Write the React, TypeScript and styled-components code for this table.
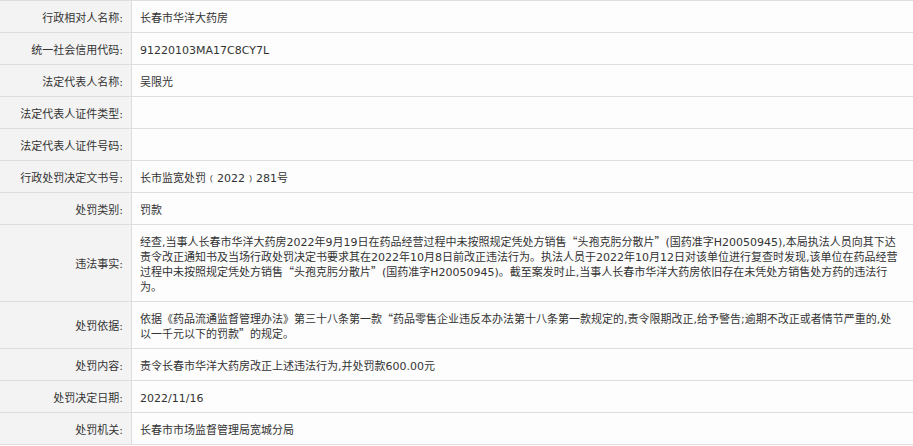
import styled, { createGlobalStyle } from 'styled-components';

const GlobalStyle = createGlobalStyle`
  html, body {
    margin: 0;
    padding: 0;
    background: #fdfdfd;
  }
`;

// DejaVu for latin/digits, Noto CJK picks up the Chinese
const Table = styled.table`
  width: 100%;
  border-collapse: collapse;
  table-layout: fixed;
  border-top: 1px solid #dedede;
  font-family: "DejaVu Sans", "Noto Sans CJK SC", sans-serif;
  font-size: 11px;
  line-height: 15px;
  color: #333;
`;

const Row = styled.tr`
  border-bottom: 1px solid #dedede;
`;

const Label = styled.th`
  width: 114px;
  padding: 9.5px 8px 6.5px 9px;
  background: #f3f3f3;
  border-right: 1px solid #dedede;
  font-weight: normal;
  text-align: right;
  vertical-align: middle;
  white-space: nowrap;
`;

const Value = styled.td`
  padding: 9.5px 12px 6.5px 8px;
  background: #fdfdfd;
  text-align: left;
  vertical-align: middle;
  word-break: break-all;
`;

// curly quotes drawn with the CJK face, as in the original page;
// zero line-height so the taller CJK metrics don't stretch the line
const Quote = styled.span`
  font-family: "Noto Sans CJK SC", sans-serif;
  line-height: 0;
`;

function renderText(text: string) {
  return text.split(/([“”])/).map((part, i) =>
    part === '“' || part === '”' ? <Quote key={i}>{part}</Quote> : part
  );
}

const rows: [string, string][] = [
  ['行政相对人名称:', '长春市华洋大药房'],
  ['统一社会信用代码:', '91220103MA17C8CY7L'],
  ['法定代表人名称:', '吴限光'],
  ['法定代表人证件类型:', ''],
  ['法定代表人证件号码:', ''],
  ['行政处罚决定文书号:', '长市监宽处罚﹙2022﹚281号'],
  ['处罚类别:', '罚款'],
  [
    '违法事实:',
    '经查,当事人长春市华洋大药房2022年9月19日在药品经营过程中未按照规定凭处方销售“头孢克肟分散片”(国药准字H20050945),本局执法人员向其下达责令改正通知书及当场行政处罚决定书要求其在2022年10月8日前改正违法行为。执法人员于2022年10月12日对该单位进行复查时发现,该单位在药品经营过程中未按照规定凭处方销售“头孢克肟分散片”(国药准字H20050945)。截至案发时止,当事人长春市华洋大药房依旧存在未凭处方销售处方药的违法行为。',
  ],
  [
    '处罚依据:',
    '依据《药品流通监督管理办法》第三十八条第一款“药品零售企业违反本办法第十八条第一款规定的,责令限期改正,给予警告;逾期不改正或者情节严重的,处以一千元以下的罚款”的规定。',
  ],
  ['处罚内容:', '责令长春市华洋大药房改正上述违法行为,并处罚款600.00元'],
  ['处罚决定日期:', '2022/11/16'],
  ['处罚机关:', '长春市市场监督管理局宽城分局'],
];

export default function App() {
  return (
    <>
      <GlobalStyle />
      <Table>
        <tbody>
          {rows.map(([label, value]) => (
            <Row key={label}>
              <Label>{label}</Label>
              <Value>{value ? renderText(value) : '\u00a0'}</Value>
            </Row>
          ))}
        </tbody>
      </Table>
    </>
  );
}
